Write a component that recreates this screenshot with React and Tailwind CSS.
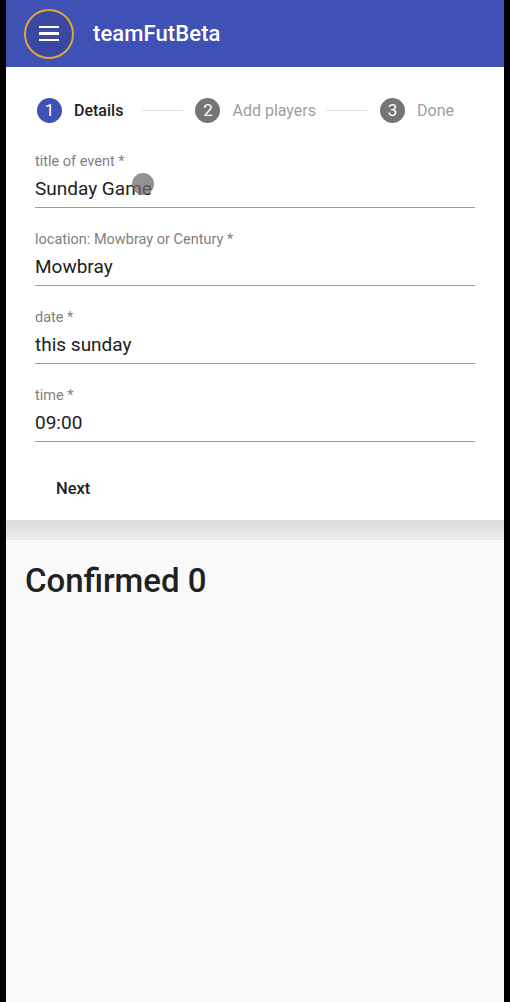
const fields = [
  { label: 'title of event *', value: 'Sunday Game' },
  { label: 'location: Mowbray or Century *', value: 'Mowbray' },
  { label: 'date *', value: 'this sunday' },
  { label: 'time *', value: '09:00' },
]

function Step({ n, label, active }) {
  return (
    <div className="flex items-center">
      <div
        className={`w-[25px] h-[25px] rounded-full flex items-center justify-center text-white text-[17px] leading-none ${
          active ? 'bg-[#3f51b5]' : 'bg-[#757575]'
        }`}
      >
        {n}
      </div>
      <span
        className={`ml-[12px] text-[16px] leading-6 ${
          active ? 'text-[#212121] font-medium' : 'text-[#9e9e9e]'
        }`}
      >
        {label}
      </span>
    </div>
  )
}

function Connector({ className }) {
  return <div className={`flex-1 h-px bg-[#e0e0e0] ${className}`} />
}

export default function App() {
  return (
    <div className="bg-black px-[6px] min-h-[1002px] font-['Roboto',sans-serif]">
      <div className="bg-[#fafafa] min-h-[1002px] flex flex-col">
        <header className="h-[67px] bg-[#3f51b5] flex items-center pl-[18px]">
          <button className="w-[50px] h-[50px] rounded-full border-2 border-[#e0a53a] bg-[#3949a3] flex flex-col items-center justify-center gap-[4px]">
            <span className="block w-[20px] h-[2.5px] bg-white" />
            <span className="block w-[20px] h-[2.5px] bg-white" />
            <span className="block w-[20px] h-[2.5px] bg-white" />
          </button>
          <h1 className="ml-[19px] text-white text-[22px] font-medium tracking-[0.1px]">teamFutBeta</h1>
        </header>

        <section className="relative bg-white">
          <div className="flex items-center pl-[31px] pr-[50px] pt-[31px]">
            <Step n="1" label="Details" active />
            <Connector className="ml-[19px] mr-[12px]" />
            <Step n="2" label="Add players" />
            <Connector className="ml-[10px] mr-[13px]" />
            <Step n="3" label="Done" />
          </div>

          <div className="px-[29px] pt-[30px] flex flex-col gap-[23px]">
            {fields.map((f) => (
              <div key={f.label} className="border-b border-[#9e9e9e] pb-[6px]">
                <div className="text-[14.5px] leading-[17px] text-[#7f7f7f]">{f.label}</div>
                <div className="mt-[7px] text-[19px] leading-6 text-[#212121]">{f.value}</div>
              </div>
            ))}
          </div>

          <div className="pl-[50px] pt-[35px] pb-[19px]">
            <span className="text-[16.5px] leading-[19px] font-medium text-[#212121]">Next</span>
          </div>

          {/* touch indicator */}
          <div className="absolute left-[126px] top-[106px] w-[22px] h-[22px] rounded-full bg-[rgba(110,110,110,0.75)]" />
        </section>

        <div className="h-[20px] bg-gradient-to-b from-[#dcdcdc] to-[#ececec] border-b border-[#e6e6e6]" />

        <h2 className="pl-[19px] pt-[21px] text-[33px] leading-[40px] font-medium text-[#212121]">Confirmed 0</h2>
      </div>
    </div>
  )
}
